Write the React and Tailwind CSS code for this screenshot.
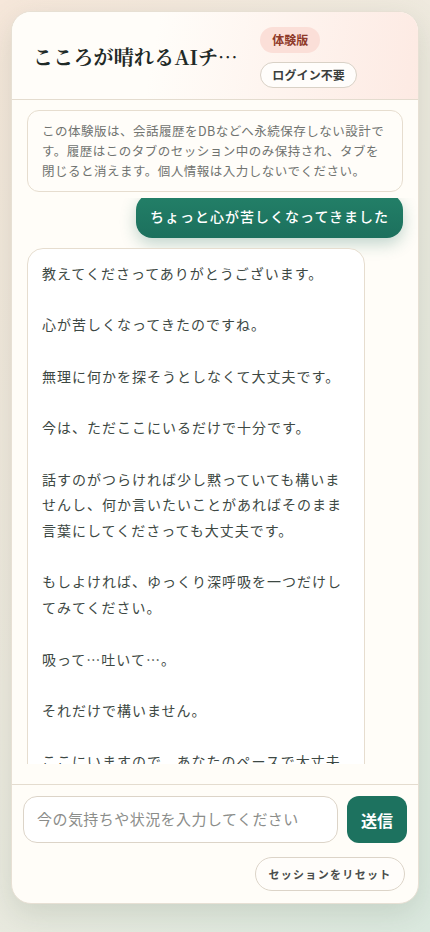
import React from "react";

const jp = { fontFamily: '"Noto Sans CJK JP", "Noto Sans", sans-serif' };
const serif = { fontFamily: '"Noto Serif CJK JP", "Noto Sans CJK JP", serif' };

const reply = `教えてくださってありがとうございます。

心が苦しくなってきたのですね。

無理に何かを探そうとしなくて大丈夫です。

今は、ただここにいるだけで十分です。

話すのがつらければ少し黙っていても構いませんし、何か言いたいことがあればそのまま言葉にしてくださっても大丈夫です。

もしよければ、ゆっくり深呼吸を一つだけしてみてください。

吸って…吐いて…。

それだけで構いません。

ここにいますので、あなたのペースで大丈夫です。`;

export default function App() {
  return (
    <div
      className="min-h-screen w-full bg-[linear-gradient(125deg,#f6e7da_0%,#eeeadf_45%,#dbe9df_100%)] px-[11px] pt-[11px] pb-[28px]"
      style={jp}
    >
      <div className="flex h-[893px] flex-col overflow-hidden rounded-[20px] border border-[#e7e0d4] bg-[#fffdf8] shadow-[0_10px_30px_rgba(90,110,90,0.18)]">
        {/* header */}
        <div className="flex h-[88px] shrink-0 items-center gap-[14px] border-b border-[#e4dccf] bg-[linear-gradient(100deg,#fffdf9_35%,#fdeae3_100%)] pt-[3px] pl-[21px] pr-[61px]">
          <h1
            className="min-w-0 flex-1 truncate text-[20px] font-bold tracking-[0.01em] text-[#1f2a27]"
            style={serif}
          >
            こころが晴れるAIチャット
          </h1>
          <div className="flex shrink-0 flex-col items-start gap-[9px]">
            <span className="flex h-[26px] items-center rounded-full bg-[#fbdfd8] px-[12px] text-[12px] font-bold text-[#8f3a2a]">
              体験版
            </span>
            <span className="flex h-[26px] items-center rounded-full border border-[#d9d1c6] bg-[#fffdfb] px-[11px] text-[12px] font-bold tracking-[0.01em] text-[#3b3f3d]">
              ログイン不要
            </span>
          </div>
        </div>

        {/* notice */}
        <div className="shrink-0 px-[15px] pt-[10px] pb-[6px]">
          <div className="rounded-[12px] border border-[#e6ddcf] bg-[#fffdf9] px-[14px] py-[10px] text-[12.5px] leading-[20px] tracking-[0.04em] text-[#707370]">
            この体験版は、会話履歴をDBなどへ永続保存しない設計です。履歴はこのタブのセッション中のみ保持され、タブを閉じると消えます。個人情報は入力しないでください。
          </div>
        </div>

        {/* messages */}
        <div className="min-h-0 flex-1 overflow-hidden px-[15px]">
          <div className="-mt-[4px] flex flex-col gap-[10px]">
            <div className="flex justify-end">
              <div className="rounded-[16px] bg-[linear-gradient(180deg,#238068,#1c705d)] px-[14px] py-[10px] text-[14px] font-medium leading-[24px] tracking-[1px] text-white shadow-[0_6px_16px_rgba(31,112,92,0.28)]">
                ちょっと心が苦しくなってきました
              </div>
            </div>
            <div className="flex justify-start">
              <div className="w-[338px] whitespace-pre-line rounded-[16px] border border-[#e6ddcf] bg-white px-[14px] py-[12px] text-[14px] leading-[25.7px] tracking-[1px] text-[#3d4843]">
                {reply}
              </div>
            </div>
          </div>
        </div>
        <div className="h-[20px] shrink-0" />

        {/* footer */}
        <div className="shrink-0 border-t border-[#e4dccf] px-[11px] pt-[11px] pb-[12px]">
          <div className="flex items-center gap-[9px]">
            <div className="flex h-[47px] flex-1 items-center rounded-[14px] border border-[#dcd4c8] bg-white pl-[13px] text-[15px] tracking-[0.03em] text-[#8b8d8a]">
              今の気持ちや状況を入力してください
            </div>
            <button className="flex h-[47px] w-[60px] items-center justify-center rounded-[12px] bg-[#1d725f] text-[16px] font-bold text-white">
              送信
            </button>
          </div>
          <div className="mt-[14px] flex justify-end pr-[2px]">
            <button className="flex h-[34px] w-[150px] items-center justify-center rounded-full border border-[#dcd4c8] bg-[#fffdfa] text-[11px] font-bold tracking-[0.12em] text-[#4a4d4b]">
              セッションをリセット
            </button>
          </div>
        </div>
      </div>
    </div>
  );
}
